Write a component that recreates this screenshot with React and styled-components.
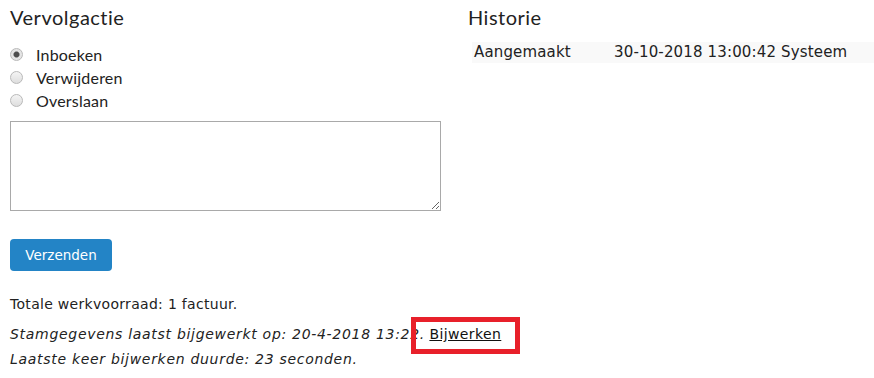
import React from 'react';
import styled, { createGlobalStyle } from 'styled-components';

const GlobalStyle = createGlobalStyle`
  html, body {
    margin: 0;
    padding: 0;
    background: #fff;
  }
  body {
    color: #222;
    font-family: "DejaVu Sans", Verdana, sans-serif;
  }
`;

const Page = styled.div`
  position: relative;
  display: flex;
  padding: 0 0 0 10px;
  width: 874px;
  height: 378px;
  box-sizing: border-box;
  overflow: hidden;
`;

const LeftColumn = styled.div`
  width: 431px;
  flex-shrink: 0;
`;

const RightColumn = styled.div`
  flex: 1;
  margin-left: 27px;
`;

const Heading = styled.h2`
  font-family: Lato, "Open Sans", sans-serif;
  font-weight: 400;
  font-size: 20px;
  line-height: 24px;
  letter-spacing: 0.5px;
  margin: 5px 0 0;
  color: #222;
`;

const RadioList = styled.div`
  display: flex;
  flex-direction: column;
  margin-top: 14px;
`;

const RadioRow = styled.label`
  display: flex;
  align-items: center;
  height: 23px;
  gap: 13px;
  font-family: Lato, "Open Sans", sans-serif;
  font-size: 16px;
  letter-spacing: 0.2px;
  color: #222;
`;

const Radio = styled.input.attrs({ type: 'radio' })`
  appearance: none;
  margin: 0;
  width: 13px;
  height: 13px;
  border-radius: 50%;
  border: 1px solid #b9b9b9;
  box-sizing: border-box;
  background: linear-gradient(#f4f4f4, #dedede);

  &:checked {
    background: radial-gradient(circle, #4d4d4d 0 2.4px, #9a9a9a 3px, #e4e4e4 3.6px);
  }
`;

const Note = styled.textarea`
  display: block;
  width: 431px;
  height: 90px;
  margin-top: 9px;
  box-sizing: border-box;
  border: 1px solid #a9a9a9;
  font-family: "DejaVu Sans", Verdana, sans-serif;
`;

const SubmitButton = styled.button`
  display: block;
  width: 102px;
  height: 32px;
  margin-top: 28px;
  border: none;
  border-radius: 4px;
  background: #2384c6;
  color: #fff;
  font-family: "DejaVu Sans", Verdana, sans-serif;
  font-size: 13.5px;
  cursor: pointer;
`;

const Summary = styled.p`
  margin: 23px 0 0;
  font-size: 14px;
  line-height: 20px;
  letter-spacing: 0.3px;
`;

const Status = styled.p`
  margin: 8px 0 0;
  font-size: 14px;
  line-height: 24.5px;
  white-space: nowrap;
`;

const Remark = styled.i`
  letter-spacing: 0.7px;
`;

const UpdateLink = styled.a`
  color: #111;
  text-decoration: underline;
  letter-spacing: 0.4px;
`;

const Highlight = styled.div`
  position: absolute;
  left: 411px;
  top: 317px;
  width: 109px;
  height: 37px;
  box-sizing: border-box;
  border: 5px solid #e8202a;
  pointer-events: none;
`;

const HistoryTable = styled.table`
  margin: 13px 0 0 4px;
  width: calc(100% - 4px);
  border-collapse: collapse;
  font-size: 15px;
`;

const HistoryRow = styled.tr`
  background: #f9f9f9;
  height: 21px;
`;

const Cell = styled.td`
  padding: 0 0 0 2px;
  width: ${(p) => p.$width || 'auto'};
  line-height: 21px;
  white-space: nowrap;
  letter-spacing: 0.15px;
`;

const historie = [
  { action: 'Aangemaakt', when: '30-10-2018 13:00:42', who: 'Systeem' },
];

const App = () => {
  return (
    <>
      <GlobalStyle />
      <Page>
        <LeftColumn>
          <Heading>Vervolgactie</Heading>
          <RadioList>
            <RadioRow>
              <Radio name="actie" defaultChecked />
              Inboeken
            </RadioRow>
            <RadioRow>
              <Radio name="actie" />
              Verwijderen
            </RadioRow>
            <RadioRow>
              <Radio name="actie" />
              Overslaan
            </RadioRow>
          </RadioList>
          <Note />
          <SubmitButton>Verzenden</SubmitButton>
          <Summary>Totale werkvoorraad: 1 factuur.</Summary>
          <Status>
            <Remark>Stamgegevens laatst bijgewerkt op: 20-4-2018 13:22.</Remark>{' '}
            <UpdateLink href="#">Bijwerken</UpdateLink>
            <br />
            <Remark>Laatste keer bijwerken duurde: 23 seconden.</Remark>
          </Status>
        </LeftColumn>
        <RightColumn>
          <Heading>Historie</Heading>
          <HistoryTable>
            <tbody>
              {historie.map((row, i) => (
                <HistoryRow key={i}>
                  <Cell $width="138px">{row.action}</Cell>
                  <Cell>
                    {row.when} {row.who}
                  </Cell>
                </HistoryRow>
              ))}
            </tbody>
          </HistoryTable>
        </RightColumn>
        <Highlight />
      </Page>
    </>
  );
};

export default App;
